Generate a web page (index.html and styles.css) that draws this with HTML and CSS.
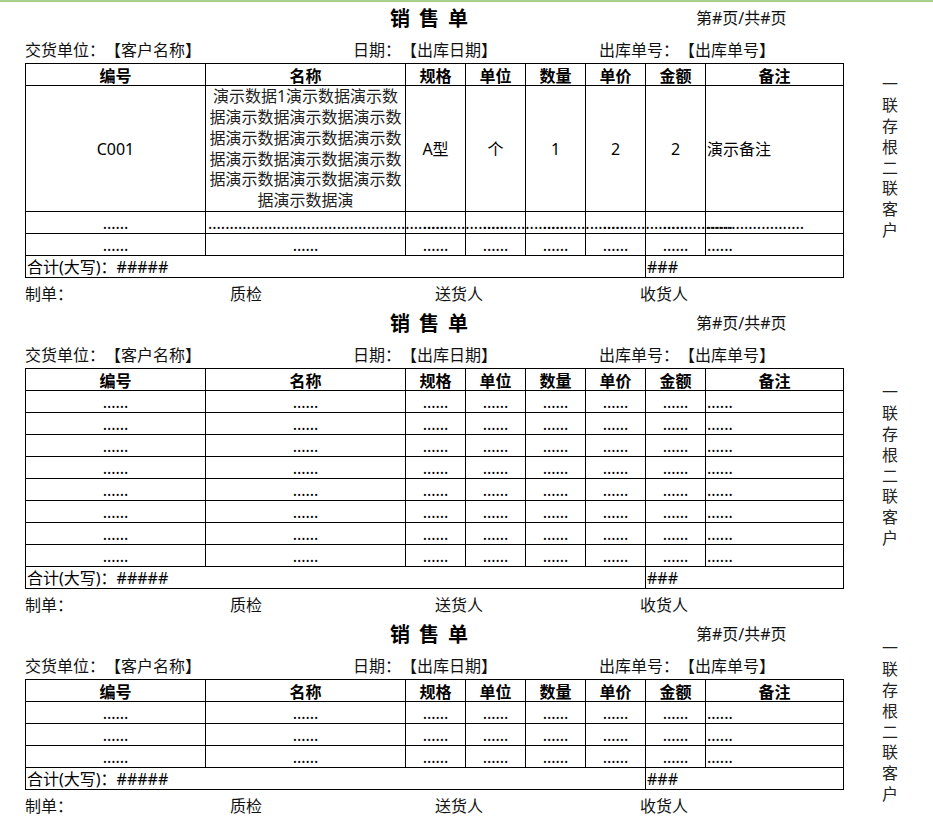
FILE: index.html
```html
<!DOCTYPE html>
<html lang="zh-CN">
<head>
<meta charset="utf-8">
<title>销售单</title>
<link rel="stylesheet" href="styles.css">
</head>
<body>
<div class="doc">

<section class="sheet">
  <div class="form">
    <div class="title-row"><h1 class="title">销售单</h1><span class="page-no">第#页/共#页</span></div>
    <div class="info-row"><span>交货单位：【客户名称】</span><span>日期：【出库日期】</span><span>出库单号：【出库单号】</span></div>
    <table class="grid">
      <colgroup><col class="c1"><col class="c2"><col class="c3"><col class="c3"><col class="c3"><col class="c3"><col class="c3"><col class="c8"></colgroup>
      <thead><tr><th>编号</th><th>名称</th><th>规格</th><th>单位</th><th>数量</th><th>单价</th><th>金额</th><th>备注</th></tr></thead>
      <tbody>
        <tr class="tall"><td>C001</td><td class="name">演示数据1演示数据演示数据演示数据演示数据演示数据演示数据演示数据演示数据演示数据演示数据演示数据演示数据演示数据演示数据演示数据演</td><td>A型</td><td>个</td><td>1</td><td>2</td><td>2</td><td class="left">演示备注</td></tr>
        <tr><td>......</td><td class="left overflow">...........................................................................................................................................</td><td>......</td><td>......</td><td>......</td><td>......</td><td>......</td><td class="left">......</td></tr>
        <tr><td>......</td><td>......</td><td>......</td><td>......</td><td>......</td><td>......</td><td>......</td><td class="left">......</td></tr>
        <tr><td colspan="6" class="left">合计(大写)：#####</td><td colspan="2" class="left">###</td></tr>
      </tbody>
    </table>
    <div class="sign-row"><span>制单：</span><span>质检</span><span>送货人</span><span>收货人</span></div>
  </div>
  <div class="copy-label">一联存根二联客户</div>
</section>

<section class="sheet">
  <div class="form">
    <div class="title-row"><h1 class="title">销售单</h1><span class="page-no">第#页/共#页</span></div>
    <div class="info-row"><span>交货单位：【客户名称】</span><span>日期：【出库日期】</span><span>出库单号：【出库单号】</span></div>
    <table class="grid">
      <colgroup><col class="c1"><col class="c2"><col class="c3"><col class="c3"><col class="c3"><col class="c3"><col class="c3"><col class="c8"></colgroup>
      <thead><tr><th>编号</th><th>名称</th><th>规格</th><th>单位</th><th>数量</th><th>单价</th><th>金额</th><th>备注</th></tr></thead>
      <tbody>
        <tr><td>......</td><td>......</td><td>......</td><td>......</td><td>......</td><td>......</td><td>......</td><td class="left">......</td></tr>
        <tr><td>......</td><td>......</td><td>......</td><td>......</td><td>......</td><td>......</td><td>......</td><td class="left">......</td></tr>
        <tr><td>......</td><td>......</td><td>......</td><td>......</td><td>......</td><td>......</td><td>......</td><td class="left">......</td></tr>
        <tr><td>......</td><td>......</td><td>......</td><td>......</td><td>......</td><td>......</td><td>......</td><td class="left">......</td></tr>
        <tr><td>......</td><td>......</td><td>......</td><td>......</td><td>......</td><td>......</td><td>......</td><td class="left">......</td></tr>
        <tr><td>......</td><td>......</td><td>......</td><td>......</td><td>......</td><td>......</td><td>......</td><td class="left">......</td></tr>
        <tr><td>......</td><td>......</td><td>......</td><td>......</td><td>......</td><td>......</td><td>......</td><td class="left">......</td></tr>
        <tr><td>......</td><td>......</td><td>......</td><td>......</td><td>......</td><td>......</td><td>......</td><td class="left">......</td></tr>
        <tr><td colspan="6" class="left">合计(大写)：#####</td><td colspan="2" class="left">###</td></tr>
      </tbody>
    </table>
    <div class="sign-row"><span>制单：</span><span>质检</span><span>送货人</span><span>收货人</span></div>
  </div>
  <div class="copy-label">一联存根二联客户</div>
</section>

<section class="sheet">
  <div class="form">
    <div class="title-row"><h1 class="title">销售单</h1><span class="page-no">第#页/共#页</span></div>
    <div class="info-row"><span>交货单位：【客户名称】</span><span>日期：【出库日期】</span><span>出库单号：【出库单号】</span></div>
    <table class="grid">
      <colgroup><col class="c1"><col class="c2"><col class="c3"><col class="c3"><col class="c3"><col class="c3"><col class="c3"><col class="c8"></colgroup>
      <thead><tr><th>编号</th><th>名称</th><th>规格</th><th>单位</th><th>数量</th><th>单价</th><th>金额</th><th>备注</th></tr></thead>
      <tbody>
        <tr><td>......</td><td>......</td><td>......</td><td>......</td><td>......</td><td>......</td><td>......</td><td class="left">......</td></tr>
        <tr><td>......</td><td>......</td><td>......</td><td>......</td><td>......</td><td>......</td><td>......</td><td class="left">......</td></tr>
        <tr><td>......</td><td>......</td><td>......</td><td>......</td><td>......</td><td>......</td><td>......</td><td class="left">......</td></tr>
        <tr><td colspan="6" class="left">合计(大写)：#####</td><td colspan="2" class="left">###</td></tr>
      </tbody>
    </table>
    <div class="sign-row"><span>制单：</span><span>质检</span><span>送货人</span><span>收货人</span></div>
  </div>
  <div class="copy-label">一联存根二联客户</div>
</section>

</div>
</body>
</html>
```

FILE: styles.css
```css
html, body {
  margin: 0;
  padding: 0;
  background: #ffffff;
}

body {
  border-top: 2px solid #a6d08a;
  font-family: "Noto Sans", "Noto Sans CJK SC", sans-serif;
  font-size: 16px;
  color: #111111;
  text-spacing-trim: space-all;
}

.doc {
  padding-top: 2px;
}

.sheet {
  display: flex;
  align-items: center;
  padding-left: 25px;
}

.form {
  width: 819px;
}

.title-row {
  display: grid;
  grid-template-columns: 365px 306px auto;
  height: 28px;
  line-height: 28px;
  margin-bottom: 5px;
}

.title {
  grid-column: 2;
  margin: 0;
  font-family: "Noto Sans CJK SC", sans-serif;
  font-size: 20px;
  font-weight: 700;
  letter-spacing: 9px;
  color: #000000;
}

.page-no {
  grid-column: 3;
}

.info-row {
  display: grid;
  grid-template-columns: 328px 246px auto;
  height: 26px;
  line-height: 26px;
}

.grid {
  width: 819px;
  border-collapse: collapse;
  table-layout: fixed;
  color: #000000;
}

.grid .c1 { width: 180px; }
.grid .c2 { width: 200px; }
.grid .c3 { width: 60px; }
.grid .c8 { width: 138px; }

.grid tr {
  height: 22px;
}

.grid th,
.grid td {
  border: 1px solid #000000;
  padding: 0 1px;
  text-align: center;
  vertical-align: middle;
  line-height: 20px;
  white-space: nowrap;
  overflow: visible;
}

.grid th {
  font-weight: 700;
  font-family: "Noto Sans CJK SC", sans-serif;
}

.grid tr.tall {
  height: 126px;
}

.grid td.name {
  white-space: normal;
  padding: 0 3px;
  line-height: 20.8px;
  color: #222222;
}

.grid td.left {
  text-align: left;
}

.grid td.overflow {
  padding-left: 2px;
}

.sign-row {
  display: grid;
  grid-template-columns: repeat(4, 205px);
  height: 31px;
  line-height: 33px;
}

.copy-label {
  margin-left: 38px;
  width: 16px;
  line-height: 20.8px;
  font-family: "Noto Sans CJK SC", sans-serif;
  word-break: break-all;
  color: #222222;
}
```
